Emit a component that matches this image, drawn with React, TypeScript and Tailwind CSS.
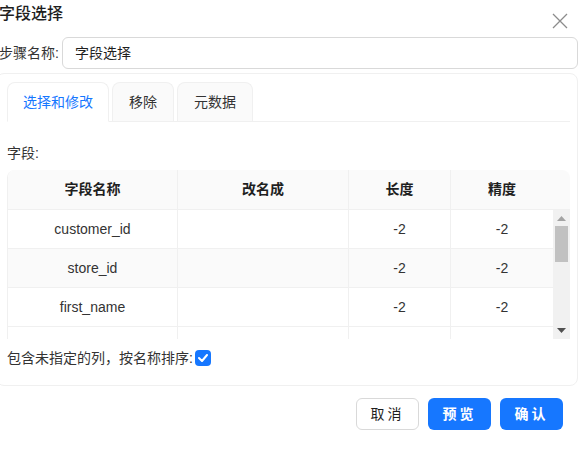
import React from 'react';

const rows = [
  { name: 'customer_id', rename: '', length: '-2', precision: '-2' },
  { name: 'store_id', rename: '', length: '-2', precision: '-2' },
  { name: 'first_name', rename: '', length: '-2', precision: '-2' },
  // partly hidden under the scroll edge, so its text is never visible
  { name: '', rename: '', length: '', precision: '' },
];

export default function App() {
  return (
    <div
      className="w-[583px] h-[449px] bg-white overflow-hidden text-[14px] text-[#1f1f1f]"
      style={{ fontFamily: '"Liberation Sans", "Noto Sans CJK SC", sans-serif' }}
    >
      {/* header */}
      <div className="flex items-start justify-between h-[34px]">
        <div className="ml-[-1px] pt-[2px] text-[16px] leading-[24px] font-medium">字段选择</div>
        <button className="mt-[13px] mr-[15px] w-[16px] h-[16px] flex items-center justify-center">
          <svg width="16" height="16" viewBox="0 0 16 16" fill="none" stroke="#8c8c8c" strokeWidth="1.3">
            <path d="M1 1L15 15M15 1L1 15" />
          </svg>
        </button>
      </div>

      {/* step name */}
      <div className="flex items-center h-[32px] mt-[3px]">
        <label className="ml-[-1px] w-[63px] shrink-0 text-[14px] leading-[22px] text-[#333]">步骤名称:</label>
        <div className="w-[516px] h-[32px] border border-[#d9d9d9] rounded-[6px] flex items-center px-[12px] text-[14px] text-[#1f1f1f]">
          字段选择
        </div>
      </div>

      {/* card */}
      <div className="ml-[-4px] mt-[4px] w-[582px] h-[313px] border border-[#f0f0f0] rounded-[8px] pl-[10px] pr-[7px] pt-[8px]">
        {/* tabs */}
        <div className="flex items-end gap-[3px] border-b border-[#f0f0f0] h-[40px]">
          <div className="h-[40px] px-[15px] flex items-center border border-[#f0f0f0] border-b-white rounded-t-[8px] bg-white text-[#1677ff] mb-[-1px]">
            选择和修改
          </div>
          <div className="h-[39px] px-[16px] flex items-center border border-[#f0f0f0] border-b-0 rounded-t-[8px] bg-[#fafafa] text-[#333]">
            移除
          </div>
          <div className="h-[39px] px-[16px] flex items-center border border-[#f0f0f0] border-b-0 rounded-t-[8px] bg-[#fafafa] text-[#333]">
            元数据
          </div>
        </div>

        <div className="mt-[20px] leading-[22px] text-[#333]">字段:</div>

        {/* table */}
        <div className="mt-[6px] w-[563px] border-l border-[#f0f0f0] rounded-tl-[8px] rounded-tr-[8px] overflow-hidden">
          <div className="flex h-[40px] bg-[#fafafa] font-semibold text-[#1f1f1f] border-b border-[#f0f0f0]">
            <div className="w-[170px] flex items-center justify-center border-r border-[#f0f0f0]">字段名称</div>
            <div className="w-[171px] flex items-center justify-center border-r border-[#f0f0f0]">改名成</div>
            <div className="w-[102px] flex items-center justify-center border-r border-[#f0f0f0]">长度</div>
            <div className="w-[102px] flex items-center justify-center">精度</div>
            <div className="w-[17px]" />
          </div>
          <div className="flex h-[129px] overflow-hidden">
            <div className="w-[545px]">
              {rows.map((r, i) => (
                <div
                  key={i}
                  className={`flex h-[39px] border-b border-[#f0f0f0] text-[#333] ${i === 1 ? 'bg-[#fafafa]' : 'bg-white'}`}
                >
                  <div className="w-[170px] flex items-center justify-center border-r border-[#f0f0f0]">{r.name}</div>
                  <div className="w-[171px] flex items-center justify-center border-r border-[#f0f0f0]">{r.rename}</div>
                  <div className="w-[102px] flex items-center justify-center border-r border-[#f0f0f0]">{r.length}</div>
                  <div className="w-[102px] flex items-center justify-center">{r.precision}</div>
                </div>
              ))}
            </div>
            {/* scrollbar */}
            <div className="w-[17px] h-[129px] bg-[#f1f1f1] flex flex-col items-center">
              <svg width="9" height="5" viewBox="0 0 9 5" className="mt-[6px]">
                <path d="M0 5L4.5 0L9 5Z" fill="#a3a3a3" />
              </svg>
              <div className="mt-[5px] w-[13px] h-[36px] bg-[#c1c1c1]" />
              <div className="flex-1" />
              <svg width="9" height="5" viewBox="0 0 9 5" className="mb-[6px]">
                <path d="M0 0L9 0L4.5 5Z" fill="#505050" />
              </svg>
            </div>
          </div>
        </div>

        {/* checkbox */}
        <div className="mt-[8px] flex items-center h-[22px] text-[#333]">
          <span>包含未指定的列，按名称排序:</span>
          <span className="ml-[2px] w-[16px] h-[16px] rounded-[4px] bg-[#1677ff] flex items-center justify-center">
            <svg width="10" height="8" viewBox="0 0 10 8" fill="none" stroke="white" strokeWidth="2" strokeLinecap="round" strokeLinejoin="round">
              <path d="M1 4L4 7L9 1" />
            </svg>
          </span>
        </div>
      </div>

      {/* footer */}
      <div className="flex justify-end gap-[9px] mt-[12px] mr-[20px]">
        <button className="w-[63px] h-[32px] rounded-[6px] border border-[#d9d9d9] bg-white text-[#1f1f1f] tracking-[3px]">取消</button>
        <button className="w-[63px] h-[32px] rounded-[6px] bg-[#1677ff] text-white font-semibold tracking-[3px]">预览</button>
        <button className="w-[63px] h-[32px] rounded-[6px] bg-[#1677ff] text-white font-semibold tracking-[3px]">确认</button>
      </div>
    </div>
  );
}
